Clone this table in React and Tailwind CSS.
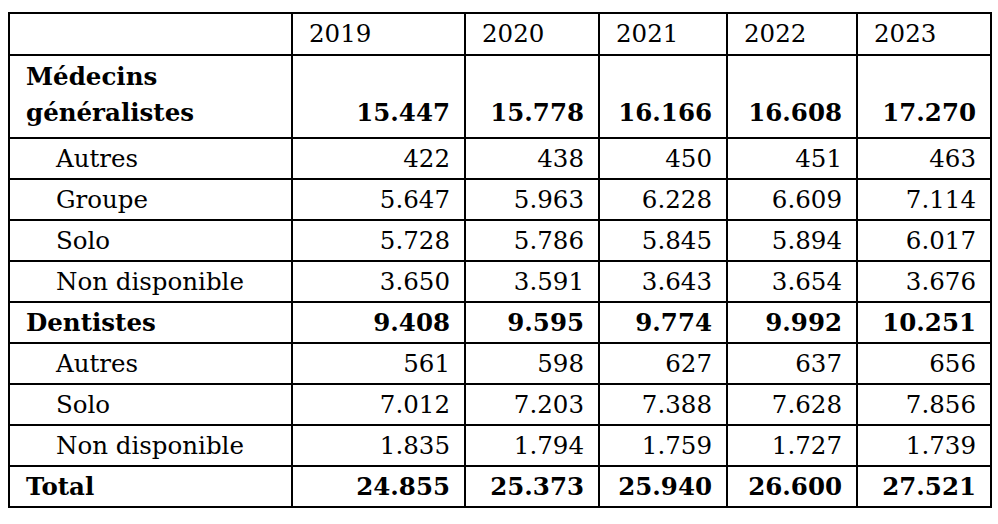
import React from "react";

const rows = [
  { label: "Autres", v: ["422", "438", "450", "451", "463"] },
  { label: "Groupe", v: ["5.647", "5.963", "6.228", "6.609", "7.114"] },
  { label: "Solo", v: ["5.728", "5.786", "5.845", "5.894", "6.017"] },
  { label: "Non disponible", v: ["3.650", "3.591", "3.643", "3.654", "3.676"] },
];
const rows2 = [
  { label: "Autres", v: ["561", "598", "627", "637", "656"] },
  { label: "Solo", v: ["7.012", "7.203", "7.388", "7.628", "7.856"] },
  { label: "Non disponible", v: ["1.835", "1.794", "1.759", "1.727", "1.739"] },
];

const cell = "border-2 border-black";

function Sub({ r }) {
  return (
    <tr className="h-[41px]">
      <td className={`${cell} pl-[46px] align-middle`}>{r.label}</td>
      {r.v.map((x, i) => (
        <td key={i} className={`${cell} text-right pr-[14px]`}>{x}</td>
      ))}
    </tr>
  );
}

function Bold({ label, v }) {
  return (
    <tr className="h-[41px] font-bold">
      <td className={`${cell} pl-[16px]`}>{label}</td>
      {v.map((x, i) => (
        <td key={i} className={`${cell} text-right pr-[14px]`}>{x}</td>
      ))}
    </tr>
  );
}

export default function App() {
  return (
    <div className="w-[998px] h-[524px] bg-white pl-[8px] pt-[12px]">
      <table
        className="border-collapse table-fixed text-black text-[24.5px] leading-[30px]"
        style={{ fontFamily: '"DejaVu Serif", serif', width: "982px" }}
      >
        <colgroup>
          <col className="w-[283px]" />
          <col className="w-[173px]" />
          <col className="w-[134px]" />
          <col className="w-[128px]" />
          <col className="w-[130px]" />
          <col className="w-[134px]" />
        </colgroup>
        <tbody>
          <tr className="h-[42px]">
            <td className={cell}></td>
            {["2019", "2020", "2021", "2022", "2023"].map((y) => (
              <td key={y} className={`${cell} pl-[16px]`}>{y}</td>
            ))}
          </tr>
          <tr className="h-[83px] font-bold">
            <td className={`${cell} pl-[16px] align-bottom pb-[6px] leading-[36px]`}>
              Médecins
              <br />
              généralistes
            </td>
            {["15.447", "15.778", "16.166", "16.608", "17.270"].map((x, i) => (
              <td key={i} className={`${cell} text-right pr-[14px] align-bottom pb-[6px] leading-[36px]`}>{x}</td>
            ))}
          </tr>
          {rows.map((r) => (
            <Sub key={r.label} r={r} />
          ))}
          <Bold label="Dentistes" v={["9.408", "9.595", "9.774", "9.992", "10.251"]} />
          {rows2.map((r) => (
            <Sub key={r.label + "2"} r={r} />
          ))}
          <Bold label="Total" v={["24.855", "25.373", "25.940", "26.600", "27.521"]} />
        </tbody>
      </table>
    </div>
  );
}
